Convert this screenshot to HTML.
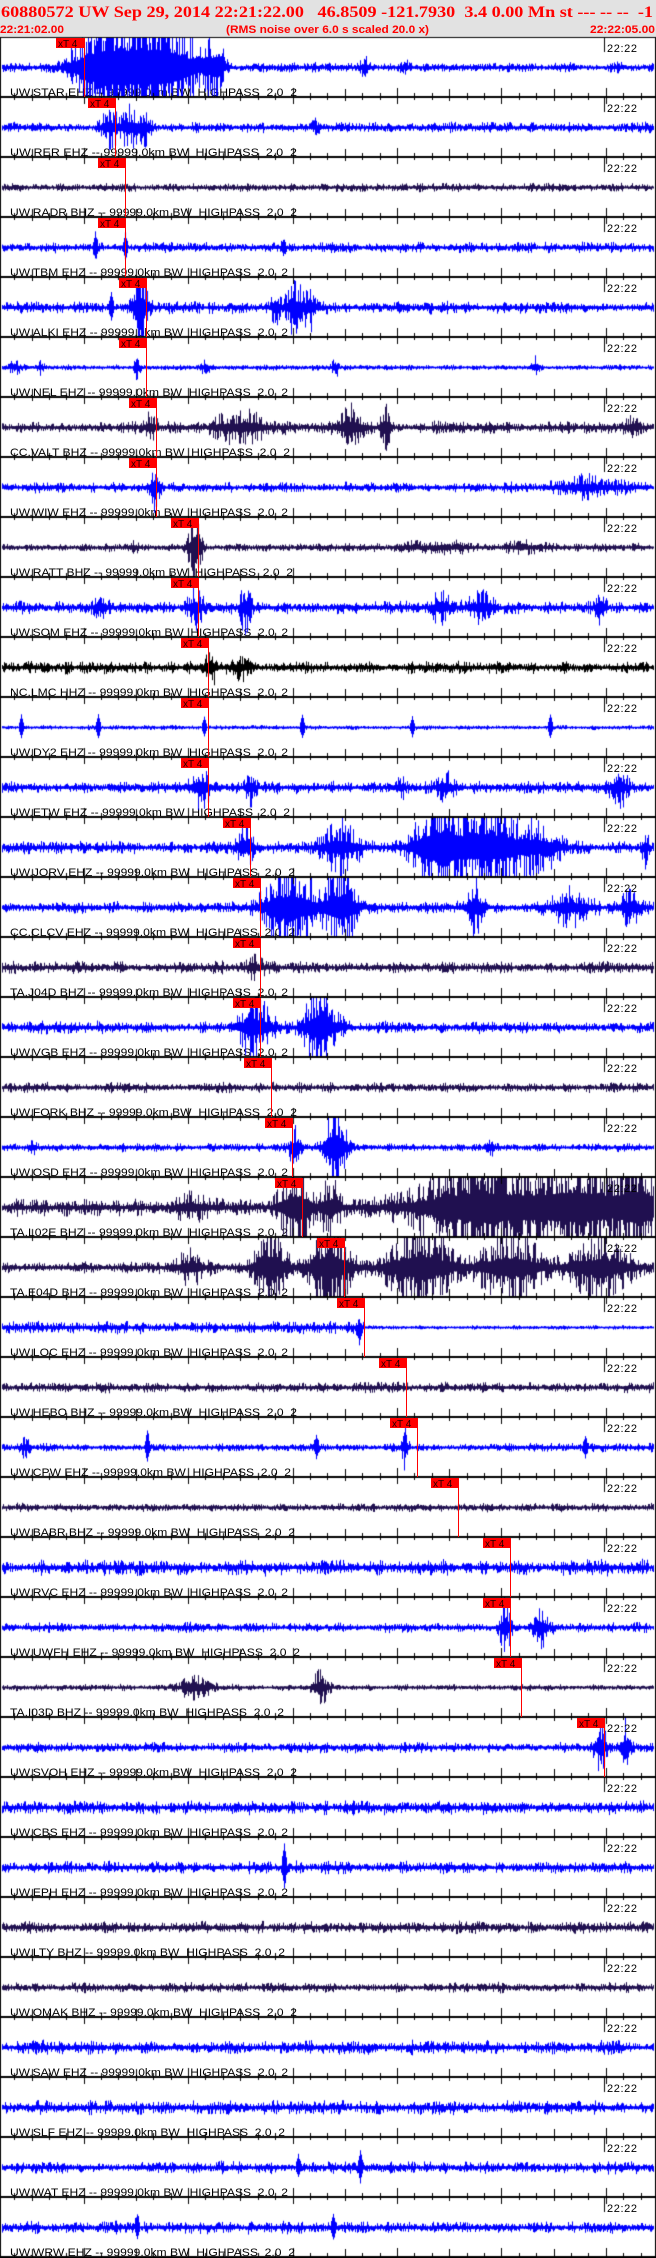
<!DOCTYPE html>
<html><head><meta charset="utf-8">
<style>
html,body{margin:0;padding:0;background:#fff;}
#wrap{position:relative;width:656px;height:2258px;overflow:hidden;background:#fff;}
svg,canvas{position:absolute;left:0;top:0;}
.lb text{font-family:"Liberation Sans",sans-serif;font-size:11px;fill:#000;white-space:pre;}
.tm{font-family:"Liberation Sans",sans-serif;font-size:11px;fill:#000;}
.mk text{font-family:"Liberation Sans",sans-serif;font-size:10px;fill:#200;}
.mk rect{fill:#f00;}
.mk line{stroke:#f00;stroke-width:1;}
</style></head><body>
<div id="wrap">
<svg width="656" height="2258" class="lb">
<rect x="0" y="0" width="656" height="37" fill="#e2e2e2"/>
<text x="1" y="17" textLength="652" lengthAdjust="spacingAndGlyphs" style="font-family:'Liberation Serif',serif;font-weight:bold;font-size:16px;fill:#f00">60880572 UW Sep 29, 2014 22:21:22.00   46.8509 -121.7930  3.4 0.00 Mn st --- -- --  -1</text>
<text x="0" y="33" textLength="64" lengthAdjust="spacingAndGlyphs" style="font-weight:bold;font-size:11px;fill:#f00">22:21:02.00</text>
<text x="226" y="33" textLength="203" lengthAdjust="spacingAndGlyphs" style="font-weight:bold;font-size:11px;fill:#f00">(RMS noise over 6.0 s scaled 20.0 x)</text>
<text x="590" y="33" textLength="65" lengthAdjust="spacingAndGlyphs" style="font-weight:bold;font-size:11px;fill:#f00">22:22:05.00</text>
<g>
<text x="10" y="96" textLength="287" lengthAdjust="spacingAndGlyphs">UW.STAR EHZ -- 99999.0km BW  HIGHPASS  2.0  2</text>
<text x="10" y="156" textLength="287" lengthAdjust="spacingAndGlyphs">UW.RER EHZ -- 99999.0km BW  HIGHPASS  2.0  2</text>
<text x="10" y="216" textLength="287" lengthAdjust="spacingAndGlyphs">UW.RADR BHZ -- 99999.0km BW  HIGHPASS  2.0  2</text>
<text x="10" y="276" textLength="278" lengthAdjust="spacingAndGlyphs">UW.TBM EHZ -- 99999.0km BW  HIGHPASS  2.0  2</text>
<text x="10" y="336" textLength="278" lengthAdjust="spacingAndGlyphs">UW.ALKI EHZ -- 99999.0km BW  HIGHPASS  2.0  2</text>
<text x="10" y="396" textLength="278" lengthAdjust="spacingAndGlyphs">UW.NEL EHZ -- 99999.0km BW  HIGHPASS  2.0  2</text>
<text x="10" y="456" textLength="280" lengthAdjust="spacingAndGlyphs">CC.VALT BHZ -- 99999.0km BW  HIGHPASS  2.0  2</text>
<text x="10" y="516" textLength="278" lengthAdjust="spacingAndGlyphs">UW.WIW EHZ -- 99999.0km BW  HIGHPASS  2.0  2</text>
<text x="10" y="576" textLength="283" lengthAdjust="spacingAndGlyphs">UW.RATT BHZ -- 99999.0km BW  HIGHPASS  2.0  2</text>
<text x="10" y="636" textLength="278" lengthAdjust="spacingAndGlyphs">UW.SOM EHZ -- 99999.0km BW  HIGHPASS  2.0  2</text>
<text x="10" y="696" textLength="278" lengthAdjust="spacingAndGlyphs">NC.LMC HHZ -- 99999.0km BW  HIGHPASS  2.0  2</text>
<text x="10" y="756" textLength="278" lengthAdjust="spacingAndGlyphs">UW.DY2 EHZ -- 99999.0km BW  HIGHPASS  2.0  2</text>
<text x="10" y="816" textLength="280" lengthAdjust="spacingAndGlyphs">UW.ETW EHZ -- 99999.0km BW  HIGHPASS  2.0  2</text>
<text x="10" y="876" textLength="285" lengthAdjust="spacingAndGlyphs">UW.JORV EHZ -- 99999.0km BW  HIGHPASS  2.0  2</text>
<text x="10" y="936" textLength="285" lengthAdjust="spacingAndGlyphs">CC.CLCV EHZ -- 99999.0km BW  HIGHPASS  2.0  2</text>
<text x="10" y="996" textLength="278" lengthAdjust="spacingAndGlyphs">TA.J04D BHZ -- 99999.0km BW  HIGHPASS  2.0  2</text>
<text x="10" y="1056" textLength="278" lengthAdjust="spacingAndGlyphs">UW.VGB EHZ -- 99999.0km BW  HIGHPASS  2.0  2</text>
<text x="10" y="1116" textLength="287" lengthAdjust="spacingAndGlyphs">UW.FORK BHZ -- 99999.0km BW  HIGHPASS  2.0  2</text>
<text x="10" y="1176" textLength="278" lengthAdjust="spacingAndGlyphs">UW.OSD EHZ -- 99999.0km BW  HIGHPASS  2.0  2</text>
<text x="10" y="1236" textLength="278" lengthAdjust="spacingAndGlyphs">TA.L02E BHZ -- 99999.0km BW  HIGHPASS  2.0  2</text>
<text x="10" y="1296" textLength="278" lengthAdjust="spacingAndGlyphs">TA.E04D BHZ -- 99999.0km BW  HIGHPASS  2.0  2</text>
<text x="10" y="1356" textLength="278" lengthAdjust="spacingAndGlyphs">UW.LOC EHZ -- 99999.0km BW  HIGHPASS  2.0  2</text>
<text x="10" y="1416" textLength="287" lengthAdjust="spacingAndGlyphs">UW.HEBO BHZ -- 99999.0km BW  HIGHPASS  2.0  2</text>
<text x="10" y="1476" textLength="281" lengthAdjust="spacingAndGlyphs">UW.CPW EHZ -- 99999.0km BW  HIGHPASS  2.0  2</text>
<text x="10" y="1536" textLength="285" lengthAdjust="spacingAndGlyphs">UW.BABR BHZ -- 99999.0km BW  HIGHPASS  2.0  2</text>
<text x="10" y="1596" textLength="278" lengthAdjust="spacingAndGlyphs">UW.RVC EHZ -- 99999.0km BW  HIGHPASS  2.0  2</text>
<text x="10" y="1656" textLength="290" lengthAdjust="spacingAndGlyphs">UW.UWFH EHZ -- 99999.0km BW  HIGHPASS  2.0  2</text>
<text x="10" y="1716" textLength="274" lengthAdjust="spacingAndGlyphs">TA.I03D BHZ -- 99999.0km BW  HIGHPASS  2.0  2</text>
<text x="10" y="1776" textLength="287" lengthAdjust="spacingAndGlyphs">UW.SVOH EHZ -- 99999.0km BW  HIGHPASS  2.0  2</text>
<text x="10" y="1836" textLength="278" lengthAdjust="spacingAndGlyphs">UW.CBS EHZ -- 99999.0km BW  HIGHPASS  2.0  2</text>
<text x="10" y="1896" textLength="278" lengthAdjust="spacingAndGlyphs">UW.EPH EHZ -- 99999.0km BW  HIGHPASS  2.0  2</text>
<text x="10" y="1956" textLength="275" lengthAdjust="spacingAndGlyphs">UW.LTY BHZ -- 99999.0km BW  HIGHPASS  2.0  2</text>
<text x="10" y="2016" textLength="287" lengthAdjust="spacingAndGlyphs">UW.OMAK BHZ -- 99999.0km BW  HIGHPASS  2.0  2</text>
<text x="10" y="2076" textLength="278" lengthAdjust="spacingAndGlyphs">UW.SAW EHZ -- 99999.0km BW  HIGHPASS  2.0  2</text>
<text x="10" y="2136" textLength="275" lengthAdjust="spacingAndGlyphs">UW.SLF EHZ -- 99999.0km BW  HIGHPASS  2.0  2</text>
<text x="10" y="2196" textLength="278" lengthAdjust="spacingAndGlyphs">UW.WAT EHZ -- 99999.0km BW  HIGHPASS  2.0  2</text>
<text x="10" y="2256" textLength="285" lengthAdjust="spacingAndGlyphs">UW.WRW EHZ -- 99999.0km BW  HIGHPASS  2.0  2</text>
</g>
</svg>
<canvas id="cv" width="656" height="2258"></canvas>
<svg width="656" height="2258">
<g class="tm">
<text x="607" y="52" textLength="30">22:22</text><text x="607" y="112" textLength="30">22:22</text><text x="607" y="172" textLength="30">22:22</text><text x="607" y="232" textLength="30">22:22</text><text x="607" y="292" textLength="30">22:22</text><text x="607" y="352" textLength="30">22:22</text><text x="607" y="412" textLength="30">22:22</text><text x="607" y="472" textLength="30">22:22</text><text x="607" y="532" textLength="30">22:22</text><text x="607" y="592" textLength="30">22:22</text><text x="607" y="652" textLength="30">22:22</text><text x="607" y="712" textLength="30">22:22</text><text x="607" y="772" textLength="30">22:22</text><text x="607" y="832" textLength="30">22:22</text><text x="607" y="892" textLength="30">22:22</text><text x="607" y="952" textLength="30">22:22</text><text x="607" y="1012" textLength="30">22:22</text><text x="607" y="1072" textLength="30">22:22</text><text x="607" y="1132" textLength="30">22:22</text><text x="607" y="1192" textLength="30">22:22</text><text x="607" y="1252" textLength="30">22:22</text><text x="607" y="1312" textLength="30">22:22</text><text x="607" y="1372" textLength="30">22:22</text><text x="607" y="1432" textLength="30">22:22</text><text x="607" y="1492" textLength="30">22:22</text><text x="607" y="1552" textLength="30">22:22</text><text x="607" y="1612" textLength="30">22:22</text><text x="607" y="1672" textLength="30">22:22</text><text x="607" y="1732" textLength="30">22:22</text><text x="607" y="1792" textLength="30">22:22</text><text x="607" y="1852" textLength="30">22:22</text><text x="607" y="1912" textLength="30">22:22</text><text x="607" y="1972" textLength="30">22:22</text><text x="607" y="2032" textLength="30">22:22</text><text x="607" y="2092" textLength="30">22:22</text><text x="607" y="2152" textLength="30">22:22</text><text x="607" y="2212" textLength="30">22:22</text>
</g>
<g class="mk">
<rect x="56" y="38" width="28" height="10"/><line x1="84.5" y1="38" x2="84.5" y2="97"/><text x="58" y="47">xT 4</text>
<rect x="88" y="98" width="28" height="10"/><line x1="115.5" y1="98" x2="115.5" y2="157"/><text x="90" y="107">xT 4</text>
<rect x="98" y="158" width="28" height="10"/><line x1="125.5" y1="158" x2="125.5" y2="217"/><text x="100" y="167">xT 4</text>
<rect x="98" y="218" width="28" height="10"/><line x1="125.5" y1="218" x2="125.5" y2="277"/><text x="100" y="227">xT 4</text>
<rect x="119" y="278" width="28" height="10"/><line x1="146.5" y1="278" x2="146.5" y2="337"/><text x="121" y="287">xT 4</text>
<rect x="119" y="338" width="28" height="10"/><line x1="146.5" y1="338" x2="146.5" y2="397"/><text x="121" y="347">xT 4</text>
<rect x="129" y="398" width="28" height="10"/><line x1="156.5" y1="398" x2="156.5" y2="457"/><text x="131" y="407">xT 4</text>
<rect x="129" y="458" width="28" height="10"/><line x1="156.5" y1="458" x2="156.5" y2="517"/><text x="131" y="467">xT 4</text>
<rect x="171" y="518" width="28" height="10"/><line x1="198.5" y1="518" x2="198.5" y2="577"/><text x="173" y="527">xT 4</text>
<rect x="171" y="578" width="28" height="10"/><line x1="198.5" y1="578" x2="198.5" y2="637"/><text x="173" y="587">xT 4</text>
<rect x="181" y="638" width="28" height="10"/><line x1="208.5" y1="638" x2="208.5" y2="697"/><text x="183" y="647">xT 4</text>
<rect x="181" y="698" width="28" height="10"/><line x1="208.5" y1="698" x2="208.5" y2="757"/><text x="183" y="707">xT 4</text>
<rect x="181" y="758" width="28" height="10"/><line x1="208.5" y1="758" x2="208.5" y2="817"/><text x="183" y="767">xT 4</text>
<rect x="223" y="818" width="28" height="10"/><line x1="250.5" y1="818" x2="250.5" y2="877"/><text x="225" y="827">xT 4</text>
<rect x="233" y="878" width="28" height="10"/><line x1="260.5" y1="878" x2="260.5" y2="937"/><text x="235" y="887">xT 4</text>
<rect x="233" y="938" width="28" height="10"/><line x1="260.5" y1="938" x2="260.5" y2="997"/><text x="235" y="947">xT 4</text>
<rect x="233" y="998" width="28" height="10"/><line x1="260.5" y1="998" x2="260.5" y2="1057"/><text x="235" y="1007">xT 4</text>
<rect x="244" y="1058" width="28" height="10"/><line x1="271.5" y1="1058" x2="271.5" y2="1117"/><text x="246" y="1067">xT 4</text>
<rect x="265" y="1118" width="28" height="10"/><line x1="292.5" y1="1118" x2="292.5" y2="1177"/><text x="267" y="1127">xT 4</text>
<rect x="275" y="1178" width="28" height="10"/><line x1="302.5" y1="1178" x2="302.5" y2="1237"/><text x="277" y="1187">xT 4</text>
<rect x="317" y="1238" width="28" height="10"/><line x1="344.5" y1="1238" x2="344.5" y2="1297"/><text x="319" y="1247">xT 4</text>
<rect x="337" y="1298" width="28" height="10"/><line x1="364.5" y1="1298" x2="364.5" y2="1357"/><text x="339" y="1307">xT 4</text>
<rect x="379" y="1358" width="28" height="10"/><line x1="406.5" y1="1358" x2="406.5" y2="1417"/><text x="381" y="1367">xT 4</text>
<rect x="390" y="1418" width="28" height="10"/><line x1="417.5" y1="1418" x2="417.5" y2="1477"/><text x="392" y="1427">xT 4</text>
<rect x="431" y="1478" width="28" height="10"/><line x1="458.5" y1="1478" x2="458.5" y2="1537"/><text x="433" y="1487">xT 4</text>
<rect x="483" y="1538" width="28" height="10"/><line x1="510.5" y1="1538" x2="510.5" y2="1597"/><text x="485" y="1547">xT 4</text>
<rect x="483" y="1598" width="28" height="10"/><line x1="510.5" y1="1598" x2="510.5" y2="1657"/><text x="485" y="1607">xT 4</text>
<rect x="494" y="1658" width="28" height="10"/><line x1="521.5" y1="1658" x2="521.5" y2="1717"/><text x="496" y="1667">xT 4</text>
<rect x="577" y="1718" width="28" height="10"/><line x1="604.5" y1="1718" x2="604.5" y2="1777"/><text x="579" y="1727">xT 4</text>
</g>
</svg>
</div>
<script>
(function(){
var c=document.getElementById('cv').getContext('2d');
var B='#0000ff',D='#201050',K='#000000';
var seed=12345;function rnd(){seed=(seed*1103515245+12345)%2147483648;return seed/2147483648;}
var T=[
[B,2.5,[[100,40,25],[140,45,30],[175,30,25],[215,25,8],[365,6,6],[405,4,5]],[]],
[B,2.5,[[110,12,8],[130,14,10],[145,8,6],[315,4,4]],[]],
[D,2,[],[]],
[B,2.5,[],[[95,12],[125,12],[283,6]]],
[B,3,[[140,18,8],[275,12,4],[295,15,10],[310,12,5]],[[111,14],[138,22]]],
[B,1.2,[[15,4,6],[40,4,4],[137,8,3],[205,4,6],[335,8,3],[535,6,3]],[]],
[D,3,[[150,7,6],[240,9,25],[350,13,12],[385,18,5],[630,6,8]],[]],
[B,2.5,[[155,16,5],[590,6,30]],[]],
[D,2,[[195,30,6],[133,4,5],[410,3,15],[450,2.5,20],[520,2.5,20]],[]],
[B,3,[[100,6,10],[195,12,8],[245,15,6],[440,12,8],[480,10,12],[600,14,5]],[]],
[K,3,[[210,14,5],[240,8,8]],[]],
[B,1,[],[[21,12],[98,12],[204,10],[302,12],[412,10],[550,12]]],
[B,3,[[200,14,10],[250,10,6],[400,7,6],[445,9,8],[620,9,10]],[]],
[B,3,[[245,12,8],[340,15,20],[440,40,25],[490,35,30],[540,15,20],[645,12,3]],[]],
[B,3,[[290,30,25],[340,30,15],[475,18,8],[570,10,20],[630,12,10]],[]],
[D,3,[[255,5,10]],[]],
[B,3,[[255,20,15],[320,30,15]],[]],
[D,2.5,[],[]],
[B,2,[[32,6,3],[295,12,6],[335,35,10],[490,5,5]],[]],
[D,4,[[190,6,20],[295,30,15],[330,20,10],[480,40,60],[580,40,50],[640,35,20]],[]],
[D,3,[[190,10,15],[270,30,15],[330,30,20],[420,30,30],[510,25,30],[600,20,30]],[]],
[B,-1,[[360,8,3]],[]],
[D,2.5,[],[]],
[B,2,[[25,8,5],[405,15,3]],[[147,15],[316,10],[585,10]]],
[D,2,[],[]],
[B,4,[],[]],
[B,2.5,[[505,20,5],[540,12,8]],[]],
[D,1.5,[[195,8,15],[320,12,8]],[]],
[B,2.5,[[600,18,6],[625,18,5]],[]],
[B,3.5,[],[]],
[B,3,[],[[284,22]]],
[D,3,[],[]],
[D,2.5,[],[]],
[B,3.5,[],[]],
[B,3.5,[],[]],
[B,3,[],[[298,10],[360,14]]],
[B,3,[],[[137,12],[333,12]]]
];
for(var i=0;i<T.length;i++){
 var t=T[i],top=37+60*i,bot=top+60,base=top+30;
 c.fillStyle=t[0];
 var slow=1;
 for(var x=2;x<654;x++){
  if(x%8==0)slow=0.6+rnd()*0.8;
  var b=t[1];if(b<0)b=x<360?3:0.9;
  var e=b*slow;
  for(var g=0;g<t[2].length;g++){var q=t[2][g],d=(x-q[0])/q[2];e+=q[1]*Math.exp(-d*d);}
  var r1=rnd(),r2=rnd();
  var up=e*(0.3+1.3*r1*r1),dn=e*(0.3+1.3*r2*r2);
  for(var s=0;s<t[3].length;s++){var p=t[3][s];var dd=Math.abs(x-p[0]);if(dd<3){up+=p[1]*(1-dd/3);dn+=p[1]*(1-dd/3)*0.8;}}
  var y0=Math.max(top+1,base-up),y1=Math.min(bot-1,base+dn);
  c.fillRect(x,y0,1,Math.max(1,y1-y0+1));
 }
}
c.fillStyle='#000';
c.fillRect(0,37,656,1);c.fillRect(0,37,1,2221);c.fillRect(655,37,1,2221);
for(var i=0;i<37;i++){
 var S=97+60*i,top=S-60;
 c.fillRect(0,S-1,656,2);
 c.fillRect(604,top,1,15);
 for(var k=0;k<38;k++){
  var x=Math.round(14.1+17.4*k);if(x>654)break;
  var u=3,d=2;
  if(k%3==1){u=7;d=3;} if(k%6==4){u=8;d=6;}
  c.fillRect(x,S-1-u,1,u+d+2);
 }
}
})();
</script>
</body></html>
